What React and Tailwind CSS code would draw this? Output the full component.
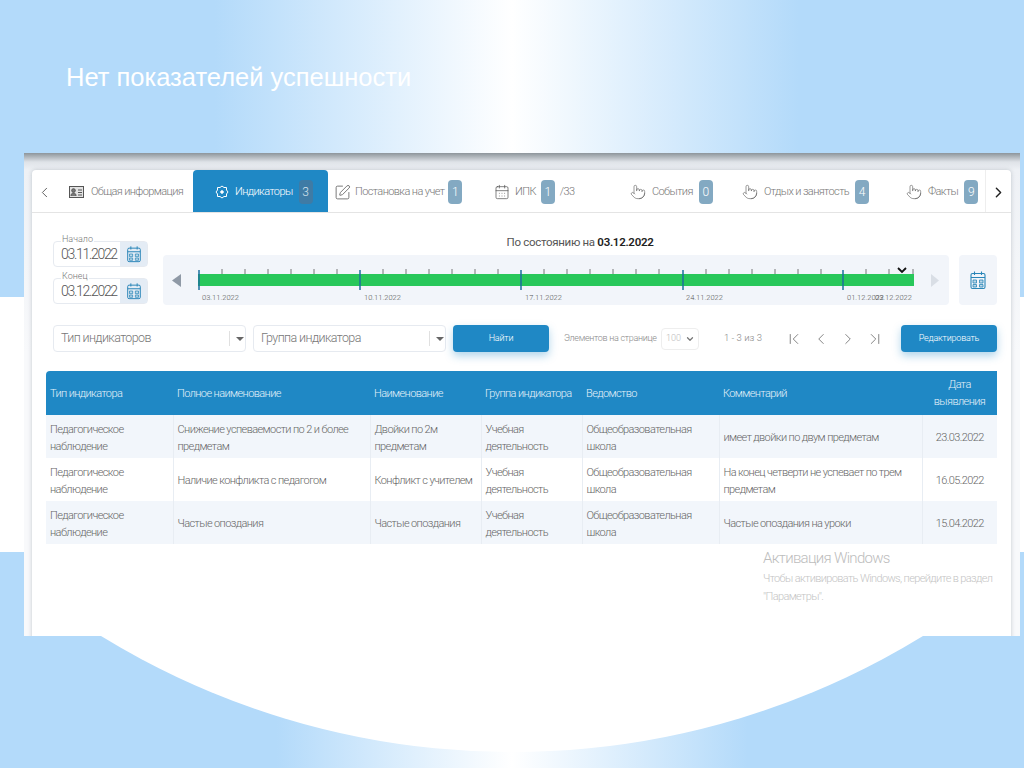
import React from 'react';
import {
  ChevronLeft,
  ChevronRight,
  ChevronFirst,
  ChevronLast,
  ChevronDown,
  SquarePen,
  CalendarDays,
  Pointer,
} from 'lucide-react';

const font = { fontFamily: 'Roboto, sans-serif' };

const handIcon = <Pointer size={16} strokeWidth={1} className="shrink-0 text-[#666]" />;

function IdIcon() {
  return (
    <svg width="15" height="12" viewBox="0 0 15 12" fill="none" className="shrink-0" stroke="#555" strokeWidth="1">
      <rect x="0.500" y="0.500" width="14" height="11" fill="#e3e3e3" />
      <circle cx="4.500" cy="4.500" r="1.800" fill="#777" />
      <path d="M2 10c0-2 1-3 2.500-3S7 8 7 10" fill="#777" />
      <path d="M9 4h4M9 6.500h4M9 9h4" />
    </svg>
  );
}

function TargetIcon() {
  return (
    <svg width="14" height="14" viewBox="0 0 14 14" fill="none" className="shrink-0" stroke="#fff" strokeWidth="1">
      <path d="M7 1l2 1.500h2.500V5L13 7l-1.500 2v2.500H9L7 13l-2-1.500H2.500V9L1 7l1.500-2V2.500H5z" />
      <circle cx="7" cy="7" r="1.300" fill="#fff" />
    </svg>
  );
}

const tabs = [
  { name: 'Общая информация', w: 'w-[135px]', pl: 'pl-[11px]', gap: 'gap-[7px]', icon: <IdIcon /> },
  { name: 'Индикаторы', badge: '3', active: true, w: 'w-[135px]', pl: 'pl-[22px]', gap: 'gap-[6px]', icon: <TargetIcon /> },
  { name: 'Постановка на учет', badge: '1', w: 'w-[152px]', pl: 'pl-[6px]', gap: 'gap-[4px]', icon: <SquarePen size={17} strokeWidth={1.1} className="shrink-0 text-[#555]" /> },
  { name: 'ИПК', badge: '1', extra: '/33', w: 'w-[135px]', pl: 'pl-[14px]', gap: 'gap-[5px]', icon: <CalendarDays size={16} strokeWidth={1.1} className="shrink-0 text-[#555]" /> },
  { name: 'События', badge: '0', w: 'w-[115px]', pl: 'pl-[15px]', gap: 'gap-[6px]', icon: handIcon },
  { name: 'Отдых и занятость', badge: '4', w: 'w-[165px]', pl: 'pl-[12px]', gap: 'gap-[6px]', icon: handIcon },
  { name: 'Факты', badge: '9', w: 'w-[90px]', pl: 'pl-[11px]', gap: 'gap-[6px]', icon: handIcon },
];

const rows = [
  ['Снижение успеваемости по 2 и более предметам', 'Двойки по 2м предметам', 'имеет двойки по двум предметам', '23.03.2022'],
  ['Наличие конфликта с педагогом', 'Конфликт с учителем', 'На конец четверти не успевает по трем предметам', '16.05.2022'],
  ['Частые опоздания', 'Частые опоздания', 'Частые опоздания на уроки', '15.04.2022'],
];

const minorTicks = [222, 245, 268, 291, 314, 337, 383, 406, 429, 452, 475, 498, 544, 567, 590, 613, 636, 659, 706, 729, 752, 775, 798, 821, 866, 889, 913];
const majorTicks = [199, 360, 521, 683, 843];
const tickLabels = [
  ['03.11.2022', 202],
  ['10.11.2022', 364],
  ['17.11.2022', 525],
  ['24.11.2022', 686],
  ['01.12.2022', 847],
  ['03.12.2022', 875],
];

function CalendarIcon({ size = 18 }) {
  return (
    <svg width={size} height={size} viewBox="0 0 18 20" fill="none" stroke="#2a86b8" strokeWidth="1.100">
      <rect x="2" y="3.500" width="14" height="15" rx="1.500" />
      <path d="M2 7.500h14M5.500 1.500v3.500M12.500 1.500v3.500" />
      <path d="M4 10h3.500v3H4zM10.500 10H14v3h-3.500zM4 14.500h3.500V17H4zM10.500 14.500H14V17h-3.500z" fill="#bcd8e8" strokeWidth="0.800" />
    </svg>
  );
}

function DateField({ label, value }) {
  return (
    <div className="relative flex h-[26px] w-[95px] rounded border border-[#e6eaf0] bg-white">
      <span className="absolute left-[7px] top-[-9px] bg-white px-px text-[9px] font-light leading-[12px] text-[#777]">{label}</span>
      <div className="flex flex-1 items-center pl-[7px] text-[14px] font-light tracking-[-1.300px] text-[#555]">{value}</div>
      <div className="flex w-[27px] shrink-0 items-center justify-center bg-[#e4ecf5]">
        <CalendarIcon />
      </div>
    </div>
  );
}

function Select({ label }) {
  return (
    <div className="flex h-[27px] w-[193px] shrink-0 items-center rounded border border-[#e6eaf0] bg-white">
      <div className="flex-1 pl-[7px] text-[12.500px] font-light tracking-[-0.6px] text-[#777]">{label}</div>
      <div className="flex h-[15px] w-[16px] items-center justify-center border-l border-[#e0e0e0]">
        <span className="ml-[4px] h-0 w-0 border-x-[4px] border-t-[4px] border-x-transparent border-t-[#666]" />
      </div>
    </div>
  );
}

function Timeline() {
  return (
    <svg width="786" height="50" viewBox="163 255 786 50" className="block shrink-0 rounded bg-[#f2f5fa]" style={font}>
      <path d="M181 274v13l-9-6.500z" fill="#8f99a6" />
      <path d="M931 274v13l8-6.500z" fill="#d9dee5" />
      <rect x="198" y="274" width="716" height="12" fill="#28c75a" />
      {minorTicks.map((x) => (
        <line key={x} x1={x} x2={x} y1="269" y2="274" stroke="#555" strokeWidth="0.800" />
      ))}
      {majorTicks.map((x) => (
        <line key={x} x1={x} x2={x} y1="270" y2="290" stroke="#1b6f9f" strokeWidth="1.500" />
      ))}
      <path d="M898 268l4 4 4-4" fill="none" stroke="#111" strokeWidth="1.800" />
      {tickLabels.map(([t, x]) => (
        <text key={t} x={x} y="300" fontSize="7.500" fill="#555" fontWeight="300">{t}</text>
      ))}
    </svg>
  );
}

export default function App() {
  return (
    <div className="relative h-[768px] w-[1024px] overflow-hidden bg-white" style={font}>
      {/* slide background */}
      <div className="absolute inset-0 flex flex-col">
        <div className="h-[297px] shrink-0 bg-[linear-gradient(90deg,#b3dafa_21%,#ffffff_50%,#b3dafa_78%)]" />
        <div className="h-[255px] shrink-0 bg-white" />
        <div className="h-[84px] shrink-0 bg-[#b3dafa]" />
        <div className="relative h-[132px] shrink-0 overflow-hidden bg-[linear-gradient(90deg,#b3dafa_27%,#ffffff_50%,#b3dafa_73%)]">
          <div className="absolute left-[-274px] top-[-1456px] h-[1572px] w-[1572px] rounded-full bg-white" />
        </div>
      </div>

      <div className="relative">
        <div className="h-[153px] pl-[66px] pt-[63px] text-[25.500px] leading-[28px] text-white" style={{ fontFamily: '"Liberation Sans", sans-serif' }}>
          Нет показателей успешности
        </div>

        {/* screenshot */}
        <div className="relative ml-[24px] h-[483px] w-[996px] overflow-hidden bg-[linear-gradient(180deg,#8d959b_0px,#dfe3e8_9px,#eef1f5_17px,#f8f9fb_200px)] pl-[8px] pr-[9px] pt-[17px]">
          <div className="flex h-[480px] w-[979px] flex-col rounded-t bg-white shadow-[0_0_4px_rgba(120,130,140,0.4)]">
            <div className="flex h-[43px] shrink-0 items-stretch border-b border-[#e4e4e4] text-[11px] font-light tracking-[-0.6px] text-[#777]">
              <div className="flex w-[26px] items-center justify-center pr-[2px] pt-[2px]">
                <ChevronLeft size={17} strokeWidth={1.3} className="text-[#555]" />
              </div>
              {tabs.map((t) => (
                <div key={t.name} className={`flex items-center pt-[2px] ${t.w} ${t.pl} ${t.gap} ${t.active ? 'rounded-t bg-[#1f88c5] text-white' : ''}`}>
                  {t.icon}
                  <span className="whitespace-nowrap">{t.name}</span>
                  {t.badge && (
                    <span className={`flex h-[24px] w-[14px] shrink-0 items-center justify-center rounded-sm text-[12px] tracking-normal ${t.active ? 'bg-[#3f7ba5] text-[#d5e4ee]' : 'bg-[#83a9c2] text-white'}`}>
                      {t.badge}
                    </span>
                  )}
                  {t.extra && <span>{t.extra}</span>}
                </div>
              ))}
              <div className="flex flex-1 items-center justify-center border-l border-[#eeeeee] pt-[2px]">
                <ChevronRight size={17} strokeWidth={2} className="text-[#222]" />
              </div>
            </div>

            <div className="px-[14px]">
              <div className="ml-[7px] flex items-end gap-[15px] pt-[22px]">
                <div className="mb-px flex shrink-0 flex-col gap-[11px]">
                  <DateField label="Начало" value="03.11.2022" />
                  <DateField label="Конец" value="03.12.2022" />
                </div>
                <div className="flex w-[834px] shrink-0 flex-col">
                  <div className="h-[20px] text-center text-[11.500px] leading-[14px] tracking-[-0.3px] text-[#555]">
                    По состоянию на <b className="font-semibold text-[#222]">03.12.2022</b>
                  </div>
                  <div className="flex gap-[10px]">
                    <Timeline />
                    <div className="flex h-[50px] w-[38px] shrink-0 items-center justify-center rounded bg-[#f2f5fa]">
                      <CalendarIcon size={20} />
                    </div>
                  </div>
                </div>
              </div>

              <div className="ml-[7px] mt-[20px] flex h-[27px] items-center">
                <Select label="Тип индикаторов" />
                <div className="w-[7px] shrink-0" />
                <Select label="Группа индикатора" />
                <button className="ml-[7px] h-[27px] w-[96px] shrink-0 rounded-sm bg-[#1f88c5] text-[9px] font-light tracking-[-0.2px] text-white shadow-[0_4px_8px_rgba(31,136,197,0.35)]">Найти</button>
                <span className="ml-[15px] w-[92px] shrink-0 whitespace-nowrap text-[9px] font-light tracking-[-0.3px] text-[#888]">Элементов на странице</span>
                <div className="ml-[5px] flex h-[22px] w-[38px] shrink-0 items-center rounded-sm border border-[#eeeeee] text-[9px] font-light text-[#bbb]">
                  <span className="flex-1 pl-[4px]">100</span>
                  <ChevronDown size={10} strokeWidth={3} className="mr-[3px] text-[#777]" />
                </div>
                <span className="ml-[25px] w-[34px] shrink-0 whitespace-nowrap text-[9.500px] font-light text-[#888]">1 - 3 из 3</span>
                <div className="ml-[27px] flex shrink-0 items-center gap-[9px] text-[#777]">
                  <ChevronFirst size={18} strokeWidth={1.2} />
                  <ChevronLeft size={18} strokeWidth={1.2} />
                  <ChevronRight size={18} strokeWidth={1.2} />
                  <ChevronLast size={18} strokeWidth={1.2} />
                </div>
                <button className="ml-[17px] h-[27px] w-[96px] shrink-0 rounded-sm bg-[#1f88c5] text-[9px] font-light tracking-[-0.2px] text-white shadow-[0_4px_8px_rgba(31,136,197,0.35)]">Редактировать</button>
              </div>

              <table className="mt-[19px] w-[951px] table-fixed border-collapse text-[11px] font-light leading-[17px] tracking-[-0.6px] text-[#666]">
                <colgroup>
                  <col className="w-[127px]" />
                  <col className="w-[197px]" />
                  <col className="w-[111px]" />
                  <col className="w-[101px]" />
                  <col className="w-[137px]" />
                  <col className="w-[203px]" />
                  <col className="w-[75px]" />
                </colgroup>
                <thead>
                  <tr className="h-[44px] bg-[#1f88c5] text-left text-[#e4f1f9]">
                    <th className="rounded-tl pl-[4px] font-light">Тип индикатора</th>
                    <th className="pl-[4px] font-light">Полное наименование</th>
                    <th className="pl-[4px] font-light">Наименование</th>
                    <th className="whitespace-nowrap pl-[4px] font-light">Группа индикатора</th>
                    <th className="pl-[4px] font-light">Ведомство</th>
                    <th className="pl-[4px] font-light">Комментарий</th>
                    <th className="px-[4px] text-center font-light">Дата выявления</th>
                  </tr>
                </thead>
                <tbody>
                  {rows.map((r, i) => (
                    <tr key={r[0]} className={i === 1 ? 'h-[43px] bg-white' : 'h-[43px] bg-[#f2f6fb]'}>
                      <td className="border-r border-[#e8edf3] pl-[4px] pt-[2px]">Педагогическое наблюдение</td>
                      <td className="border-r border-[#e8edf3] pl-[4px] pt-[2px]">{r[0]}</td>
                      <td className="border-r border-[#e8edf3] pl-[4px] pt-[2px]">{r[1]}</td>
                      <td className="border-r border-[#e8edf3] pl-[4px] pt-[2px]">Учебная деятельность</td>
                      <td className="border-r border-[#e8edf3] pl-[4px] pt-[2px]">Общеобразовательная школа</td>
                      <td className="border-r border-[#e8edf3] pl-[4px] pt-[2px]">{r[2]}</td>
                      <td className="pt-[2px] text-center">{r[3]}</td>
                    </tr>
                  ))}
                </tbody>
              </table>
            </div>
          </div>

          {/* windows watermark */}
          <div className="absolute left-[739px] top-[395px] w-[240px] font-light text-[#c4c4c4]">
            <div className="text-[15px] leading-[20px] tracking-[-0.7px] text-[#bdbdbd]">Активация Windows</div>
            <div className="mt-[2px] text-[11px] leading-[18px] tracking-[-0.63px]">Чтобы активировать Windows, перейдите в раздел "Параметры".</div>
          </div>
        </div>
      </div>
    </div>
  );
}
